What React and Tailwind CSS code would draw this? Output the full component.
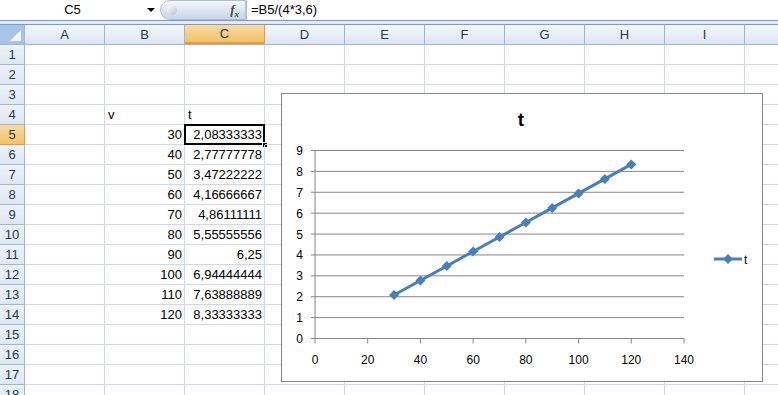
import React from "react";

const COLS = ["A", "B", "C", "D", "E", "F", "G", "H", "I"];
const ROWS = Array.from({ length: 18 }, (_, i) => i + 1);

const data = {
  4: { B: "v", C: "t" },
  5: { B: "30", C: "2,08333333" },
  6: { B: "40", C: "2,77777778" },
  7: { B: "50", C: "3,47222222" },
  8: { B: "60", C: "4,16666667" },
  9: { B: "70", C: "4,86111111" },
  10: { B: "80", C: "5,55555556" },
  11: { B: "90", C: "6,25" },
  12: { B: "100", C: "6,94444444" },
  13: { B: "110", C: "7,63888889" },
  14: { B: "120", C: "8,33333333" },
};

const points = [30, 40, 50, 60, 70, 80, 90, 100, 110, 120].map((v) => [v, v / (4 * 3.6)]);

const px = (v) => 33 + (v * 369) / 140;
const py = (v) => 244.5 - v * 20.89;

const Chart = () => {
  const line = points.map(([x, y]) => `${px(x)},${py(y)}`).join(" ");
  return (
    <div className="absolute left-[281px] top-[93px] w-[482px] h-[289px] border border-[#868686] bg-white">
      <svg width="480" height="287" className="block" style={{ fontFamily: "'Liberation Sans', Arial, sans-serif" }}>
        <text x="239" y="32" textAnchor="middle" fontSize="19" fontWeight="bold" fill="#000">t</text>
        {Array.from({ length: 10 }, (_, i) => (
          <g key={i}>
            <line x1="29" x2="402" y1={py(i)} y2={py(i)} stroke="#868686" strokeWidth="1" />
            <text x="21" y={py(i) + 4.5} textAnchor="end" fontSize="12" fill="#000">{i}</text>
          </g>
        ))}
        <line x1="33" x2="33" y1={py(9)} y2={py(0)} stroke="#868686" />
        {[0, 20, 40, 60, 80, 100, 120, 140].map((v) => (
          <g key={v}>
            <line x1={px(v)} x2={px(v)} y1={py(0)} y2={py(0) + 5} stroke="#868686" />
            <text x={px(v)} y="270" textAnchor="middle" fontSize="12" fill="#000">{v}</text>
          </g>
        ))}
        <polyline points={line} fill="none" stroke="#4a7ebb" strokeWidth="3" strokeLinejoin="round" />
        {points.map(([x, y]) => (
          <polygon
            key={x}
            points={`${px(x)},${py(y) - 5} ${px(x) + 5},${py(y)} ${px(x)},${py(y) + 5} ${px(x) - 5},${py(y)}`}
            fill="#4a7ebb"
          />
        ))}
        <line x1="432" x2="460" y1="165" y2="165" stroke="#4a7ebb" strokeWidth="3" />
        <polygon points="446,160 451,165 446,170 441,165" fill="#4a7ebb" />
        <text x="462" y="169.5" fontSize="12" fill="#000">t</text>
      </svg>
    </div>
  );
};

const FormulaBar = () => (
  <div className="flex h-[20px] items-center bg-white">
    <div className="w-[145px] text-center text-[13px]">C5</div>
    <div className="w-[12px] flex justify-center">
      <div className="w-0 h-0 border-l-[4px] border-r-[4px] border-t-[4px] border-l-transparent border-r-transparent border-t-black" />
    </div>
    <div className="ml-[3px] w-[86px] h-[20px] rounded-l-full bg-gradient-to-b from-[#f4f7fb] to-[#c8d5e6] border border-[#aebfd6] flex items-center justify-between pl-[6px] pr-[6px]">
      <div className="w-[10px] h-[10px] rounded-full bg-gradient-to-br from-white to-[#b7c4d5]" />
      <span className="italic font-bold text-[13px] text-[#4a4a4a]" style={{ fontFamily: "'Liberation Serif', serif" }}>f<sub className="text-[9px]">x</sub></span>
    </div>
    <div className="flex-1 h-[20px] border-l border-[#aebfd6] pl-[4px] flex items-center text-[13px]">=B5/(4*3,6)</div>
  </div>
);

export default function App() {
  return (
    <div className="relative w-[778px] h-[395px] overflow-hidden bg-white text-black" style={{ fontFamily: "'Liberation Sans', Arial, sans-serif" }}>
      <FormulaBar />
      <div className="h-[5px] border-t border-b border-[#7b9ccb] bg-[#e2eaf5]" />
      <div className="flex h-[20px] border-b border-[#9eb6ce]">
        <div className="w-[25px] shrink-0 border-r border-[#9eb6ce] bg-[#a9c4e9] flex items-end justify-end p-[3px]">
          <div className="w-0 h-0 border-l-[11px] border-t-[11px] border-l-transparent border-t-transparent border-b-0 border-r-0" style={{ borderBottom: "11px solid #f4f8fd", borderLeft: "11px solid transparent" }} />
        </div>
        {COLS.map((c) => (
          <div
            key={c}
            className={
              c === "C"
                ? "w-[80px] shrink-0 border-r border-b-2 border-[#f29536] bg-gradient-to-b from-[#f9dba3] to-[#f2c267] flex items-center justify-center text-[13px] text-[#27384f]"
                : "w-[80px] shrink-0 border-r border-[#9eb6ce] bg-gradient-to-b from-[#f5f8fc] to-[#dbe5f3] flex items-center justify-center text-[13px] text-[#27384f]"
            }
          >
            {c}
          </div>
        ))}
        <div className="flex-1 bg-gradient-to-b from-[#f5f8fc] to-[#dbe5f3]" />
      </div>
      {ROWS.map((r) => (
        <div key={r} className="flex h-[20px]">
          <div
            className={
              r === 5
                ? "w-[25px] shrink-0 border-r border-b border-[#f29536] bg-gradient-to-b from-[#f9dba3] to-[#f2c267] flex items-center justify-center text-[13px] text-[#27384f]"
                : "w-[25px] shrink-0 border-r border-b border-[#9eb6ce] bg-gradient-to-b from-[#eef3fa] to-[#dde7f4] flex items-center justify-center text-[13px] text-[#27384f]"
            }
          >
            {r}
          </div>
          {COLS.map((c) => {
            const val = data[r]?.[c];
            const isHeader = r === 4;
            const active = r === 5 && c === "C";
            return (
              <div
                key={c}
                className={
                  "relative w-[80px] shrink-0 border-r border-b border-[#d0d7e5] flex items-center text-[13px] " +
                  (isHeader ? "justify-start pl-[3px]" : "justify-end pr-[2px]")
                }
              >
                {val}
                {active && (
                  <>
                    <div className="absolute left-[-1px] top-[-1px] w-[81px] h-[21px] border-2 border-black" />
                    <div className="absolute right-[-4px] bottom-[-4px] w-[6px] h-[6px] bg-black border border-white" />
                  </>
                )}
              </div>
            );
          })}
          <div className="flex-1 border-b border-[#d0d7e5]" />
        </div>
      ))}
      <Chart />
    </div>
  );
}
